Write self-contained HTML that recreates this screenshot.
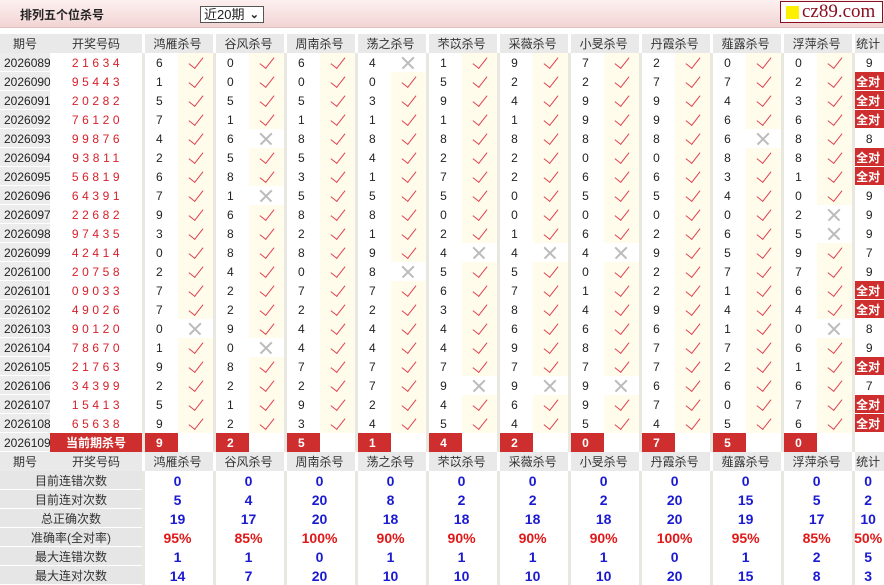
<!DOCTYPE html><html><head><meta charset="utf-8"><style>
*{margin:0;padding:0;box-sizing:border-box}
body{width:884px;height:583px;overflow:hidden;background:#fff;font-family:"Liberation Sans","Noto Sans CJK SC",sans-serif;font-size:12px;color:#222;position:relative}
.bar{position:absolute;left:0;top:0;width:884px;height:28px;background:linear-gradient(#fdf0f0,#f2d4d4);border-bottom:1px solid #e4c0c0}
.ttl{position:absolute;left:20px;top:6px;font-weight:bold;font-size:12px;color:#222}
.sel{position:absolute;left:200px;top:6px;width:64px;height:17px;border:1px solid #555;background:#fff;font-size:13px;line-height:15px;padding-left:3px}
.sel b{position:absolute;right:4px;top:1px;font-size:11px}
.logo{position:absolute;left:780px;top:1px;width:103px;height:22px;border:1px solid #8a1020;background:#fff;font-family:"Liberation Serif",serif;font-size:19px;color:#8a1020;line-height:19px;padding-left:21px}
.logo i{position:absolute;left:5px;top:4px;width:13px;height:13px;background:#ffef00}
table{position:absolute;left:0;top:34px;border-collapse:collapse;table-layout:fixed;width:884px}
td{height:19px;padding:0;text-align:center;white-space:nowrap;overflow:hidden}
.h td{background:#e9e9e9;color:#333}
.h td.g{box-shadow:inset 3px 0 #fff}
.q{background:#ececec;box-shadow:inset 0 -1px #fff;text-align:left;padding-left:4px}
.k{color:#d8202a;letter-spacing:3.6px;padding-left:3px}
.n{box-shadow:inset 3px 0 #e8e8e0;text-align:left;padding-left:14px}
.y{background:#fffcec;position:relative}
.w{position:relative}
.t{box-shadow:inset 3px 0 #e8e8e0;padding-left:2px}
.a{background:#cf2e2e;color:#fff;font-weight:bold;box-shadow:inset 3px 0 #e8e8e0,inset 0 -1px #fff}
.c::after{content:"";position:absolute;left:14px;top:1px;width:7px;height:13px;border-right:1.6px solid #e0404e;border-bottom:1.6px solid #e0404e;transform:rotate(38deg)}
.x::before,.x::after{content:"";position:absolute;left:9px;top:9px;width:16px;height:1.5px;background:#bbb;transform:rotate(45deg)}
.x::after{transform:rotate(-45deg)}
.cur .p{background:#cf2e2e;color:#fff;font-weight:bold;text-align:left;padding-left:14px;box-shadow:inset 3px 0 #e8e8e0}
.cur .kk{background:#cf2e2e;color:#fff;font-weight:bold}
.s td{font-weight:bold;color:#1a1ad0;font-size:14px;box-shadow:inset 3px 0 #e8e8e0}
.s td.l{background:#e6e6e6;color:#333;font-weight:normal;font-size:12px;box-shadow:inset 0 -1px #fff}
.s.r td{color:#e01818}
.s.r td.l{color:#333}
</style></head><body>
<div class="bar"><div class="ttl">排列五个位杀号</div><div class="sel">近20期<b>&#8964;</b></div><div class="logo"><i></i>cz89.com</div></div>
<table>
<colgroup><col style="width:50px"><col style="width:92px"><col span="20" style="width:35.5px"><col style="width:32px"></colgroup>
<tr class="h"><td>期号</td><td>开奖号码</td><td class="g" colspan="2">鸿雁杀号</td><td class="g" colspan="2">谷风杀号</td><td class="g" colspan="2">周南杀号</td><td class="g" colspan="2">荡之杀号</td><td class="g" colspan="2">芣苡杀号</td><td class="g" colspan="2">采薇杀号</td><td class="g" colspan="2">小旻杀号</td><td class="g" colspan="2">丹霞杀号</td><td class="g" colspan="2">薤露杀号</td><td class="g" colspan="2">浮萍杀号</td><td class="g">统计</td></tr>
<tr><td class="q">2026089</td><td class="k">21634</td><td class="n">6</td><td class="y c"></td><td class="n">0</td><td class="y c"></td><td class="n">6</td><td class="y c"></td><td class="n">4</td><td class="w x"></td><td class="n">1</td><td class="y c"></td><td class="n">9</td><td class="y c"></td><td class="n">7</td><td class="y c"></td><td class="n">2</td><td class="y c"></td><td class="n">0</td><td class="y c"></td><td class="n">0</td><td class="y c"></td><td class="t">9</td></tr>
<tr><td class="q">2026090</td><td class="k">95443</td><td class="n">1</td><td class="y c"></td><td class="n">0</td><td class="y c"></td><td class="n">0</td><td class="y c"></td><td class="n">0</td><td class="y c"></td><td class="n">5</td><td class="y c"></td><td class="n">2</td><td class="y c"></td><td class="n">2</td><td class="y c"></td><td class="n">7</td><td class="y c"></td><td class="n">7</td><td class="y c"></td><td class="n">2</td><td class="y c"></td><td class="a">全对</td></tr>
<tr><td class="q">2026091</td><td class="k">20282</td><td class="n">5</td><td class="y c"></td><td class="n">5</td><td class="y c"></td><td class="n">5</td><td class="y c"></td><td class="n">3</td><td class="y c"></td><td class="n">9</td><td class="y c"></td><td class="n">4</td><td class="y c"></td><td class="n">9</td><td class="y c"></td><td class="n">9</td><td class="y c"></td><td class="n">4</td><td class="y c"></td><td class="n">3</td><td class="y c"></td><td class="a">全对</td></tr>
<tr><td class="q">2026092</td><td class="k">76120</td><td class="n">7</td><td class="y c"></td><td class="n">1</td><td class="y c"></td><td class="n">1</td><td class="y c"></td><td class="n">1</td><td class="y c"></td><td class="n">1</td><td class="y c"></td><td class="n">1</td><td class="y c"></td><td class="n">9</td><td class="y c"></td><td class="n">9</td><td class="y c"></td><td class="n">6</td><td class="y c"></td><td class="n">6</td><td class="y c"></td><td class="a">全对</td></tr>
<tr><td class="q">2026093</td><td class="k">99876</td><td class="n">4</td><td class="y c"></td><td class="n">6</td><td class="w x"></td><td class="n">8</td><td class="y c"></td><td class="n">8</td><td class="y c"></td><td class="n">8</td><td class="y c"></td><td class="n">8</td><td class="y c"></td><td class="n">8</td><td class="y c"></td><td class="n">8</td><td class="y c"></td><td class="n">6</td><td class="w x"></td><td class="n">8</td><td class="y c"></td><td class="t">8</td></tr>
<tr><td class="q">2026094</td><td class="k">93811</td><td class="n">2</td><td class="y c"></td><td class="n">5</td><td class="y c"></td><td class="n">5</td><td class="y c"></td><td class="n">4</td><td class="y c"></td><td class="n">2</td><td class="y c"></td><td class="n">2</td><td class="y c"></td><td class="n">0</td><td class="y c"></td><td class="n">0</td><td class="y c"></td><td class="n">8</td><td class="y c"></td><td class="n">8</td><td class="y c"></td><td class="a">全对</td></tr>
<tr><td class="q">2026095</td><td class="k">56819</td><td class="n">6</td><td class="y c"></td><td class="n">8</td><td class="y c"></td><td class="n">3</td><td class="y c"></td><td class="n">1</td><td class="y c"></td><td class="n">7</td><td class="y c"></td><td class="n">2</td><td class="y c"></td><td class="n">6</td><td class="y c"></td><td class="n">6</td><td class="y c"></td><td class="n">3</td><td class="y c"></td><td class="n">1</td><td class="y c"></td><td class="a">全对</td></tr>
<tr><td class="q">2026096</td><td class="k">64391</td><td class="n">7</td><td class="y c"></td><td class="n">1</td><td class="w x"></td><td class="n">5</td><td class="y c"></td><td class="n">5</td><td class="y c"></td><td class="n">5</td><td class="y c"></td><td class="n">0</td><td class="y c"></td><td class="n">5</td><td class="y c"></td><td class="n">5</td><td class="y c"></td><td class="n">4</td><td class="y c"></td><td class="n">0</td><td class="y c"></td><td class="t">9</td></tr>
<tr><td class="q">2026097</td><td class="k">22682</td><td class="n">9</td><td class="y c"></td><td class="n">6</td><td class="y c"></td><td class="n">8</td><td class="y c"></td><td class="n">8</td><td class="y c"></td><td class="n">0</td><td class="y c"></td><td class="n">0</td><td class="y c"></td><td class="n">0</td><td class="y c"></td><td class="n">0</td><td class="y c"></td><td class="n">0</td><td class="y c"></td><td class="n">2</td><td class="w x"></td><td class="t">9</td></tr>
<tr><td class="q">2026098</td><td class="k">97435</td><td class="n">3</td><td class="y c"></td><td class="n">8</td><td class="y c"></td><td class="n">2</td><td class="y c"></td><td class="n">1</td><td class="y c"></td><td class="n">2</td><td class="y c"></td><td class="n">1</td><td class="y c"></td><td class="n">6</td><td class="y c"></td><td class="n">2</td><td class="y c"></td><td class="n">6</td><td class="y c"></td><td class="n">5</td><td class="w x"></td><td class="t">9</td></tr>
<tr><td class="q">2026099</td><td class="k">42414</td><td class="n">0</td><td class="y c"></td><td class="n">8</td><td class="y c"></td><td class="n">8</td><td class="y c"></td><td class="n">9</td><td class="y c"></td><td class="n">4</td><td class="w x"></td><td class="n">4</td><td class="w x"></td><td class="n">4</td><td class="w x"></td><td class="n">9</td><td class="y c"></td><td class="n">5</td><td class="y c"></td><td class="n">9</td><td class="y c"></td><td class="t">7</td></tr>
<tr><td class="q">2026100</td><td class="k">20758</td><td class="n">2</td><td class="y c"></td><td class="n">4</td><td class="y c"></td><td class="n">0</td><td class="y c"></td><td class="n">8</td><td class="w x"></td><td class="n">5</td><td class="y c"></td><td class="n">5</td><td class="y c"></td><td class="n">0</td><td class="y c"></td><td class="n">2</td><td class="y c"></td><td class="n">7</td><td class="y c"></td><td class="n">7</td><td class="y c"></td><td class="t">9</td></tr>
<tr><td class="q">2026101</td><td class="k">09033</td><td class="n">7</td><td class="y c"></td><td class="n">2</td><td class="y c"></td><td class="n">7</td><td class="y c"></td><td class="n">7</td><td class="y c"></td><td class="n">6</td><td class="y c"></td><td class="n">7</td><td class="y c"></td><td class="n">1</td><td class="y c"></td><td class="n">2</td><td class="y c"></td><td class="n">1</td><td class="y c"></td><td class="n">6</td><td class="y c"></td><td class="a">全对</td></tr>
<tr><td class="q">2026102</td><td class="k">49026</td><td class="n">7</td><td class="y c"></td><td class="n">2</td><td class="y c"></td><td class="n">2</td><td class="y c"></td><td class="n">2</td><td class="y c"></td><td class="n">3</td><td class="y c"></td><td class="n">8</td><td class="y c"></td><td class="n">4</td><td class="y c"></td><td class="n">9</td><td class="y c"></td><td class="n">4</td><td class="y c"></td><td class="n">4</td><td class="y c"></td><td class="a">全对</td></tr>
<tr><td class="q">2026103</td><td class="k">90120</td><td class="n">0</td><td class="w x"></td><td class="n">9</td><td class="y c"></td><td class="n">4</td><td class="y c"></td><td class="n">4</td><td class="y c"></td><td class="n">4</td><td class="y c"></td><td class="n">6</td><td class="y c"></td><td class="n">6</td><td class="y c"></td><td class="n">6</td><td class="y c"></td><td class="n">1</td><td class="y c"></td><td class="n">0</td><td class="w x"></td><td class="t">8</td></tr>
<tr><td class="q">2026104</td><td class="k">78670</td><td class="n">1</td><td class="y c"></td><td class="n">0</td><td class="w x"></td><td class="n">4</td><td class="y c"></td><td class="n">4</td><td class="y c"></td><td class="n">4</td><td class="y c"></td><td class="n">9</td><td class="y c"></td><td class="n">8</td><td class="y c"></td><td class="n">7</td><td class="y c"></td><td class="n">7</td><td class="y c"></td><td class="n">6</td><td class="y c"></td><td class="t">9</td></tr>
<tr><td class="q">2026105</td><td class="k">21763</td><td class="n">9</td><td class="y c"></td><td class="n">8</td><td class="y c"></td><td class="n">7</td><td class="y c"></td><td class="n">7</td><td class="y c"></td><td class="n">7</td><td class="y c"></td><td class="n">7</td><td class="y c"></td><td class="n">7</td><td class="y c"></td><td class="n">7</td><td class="y c"></td><td class="n">2</td><td class="y c"></td><td class="n">1</td><td class="y c"></td><td class="a">全对</td></tr>
<tr><td class="q">2026106</td><td class="k">34399</td><td class="n">2</td><td class="y c"></td><td class="n">2</td><td class="y c"></td><td class="n">2</td><td class="y c"></td><td class="n">7</td><td class="y c"></td><td class="n">9</td><td class="w x"></td><td class="n">9</td><td class="w x"></td><td class="n">9</td><td class="w x"></td><td class="n">6</td><td class="y c"></td><td class="n">6</td><td class="y c"></td><td class="n">6</td><td class="y c"></td><td class="t">7</td></tr>
<tr><td class="q">2026107</td><td class="k">15413</td><td class="n">5</td><td class="y c"></td><td class="n">1</td><td class="y c"></td><td class="n">9</td><td class="y c"></td><td class="n">2</td><td class="y c"></td><td class="n">4</td><td class="y c"></td><td class="n">6</td><td class="y c"></td><td class="n">9</td><td class="y c"></td><td class="n">7</td><td class="y c"></td><td class="n">0</td><td class="y c"></td><td class="n">7</td><td class="y c"></td><td class="a">全对</td></tr>
<tr><td class="q">2026108</td><td class="k">65638</td><td class="n">9</td><td class="y c"></td><td class="n">2</td><td class="y c"></td><td class="n">3</td><td class="y c"></td><td class="n">4</td><td class="y c"></td><td class="n">5</td><td class="y c"></td><td class="n">4</td><td class="y c"></td><td class="n">5</td><td class="y c"></td><td class="n">4</td><td class="y c"></td><td class="n">5</td><td class="y c"></td><td class="n">6</td><td class="y c"></td><td class="a">全对</td></tr>
<tr class="cur"><td class="q">2026109</td><td class="kk">当前期杀号</td><td class="p">9</td><td></td><td class="p">2</td><td></td><td class="p">5</td><td></td><td class="p">1</td><td></td><td class="p">4</td><td></td><td class="p">2</td><td></td><td class="p">0</td><td></td><td class="p">7</td><td></td><td class="p">5</td><td></td><td class="p">0</td><td></td><td class="t"></td></tr>
<tr class="h"><td>期号</td><td>开奖号码</td><td class="g" colspan="2">鸿雁杀号</td><td class="g" colspan="2">谷风杀号</td><td class="g" colspan="2">周南杀号</td><td class="g" colspan="2">荡之杀号</td><td class="g" colspan="2">芣苡杀号</td><td class="g" colspan="2">采薇杀号</td><td class="g" colspan="2">小旻杀号</td><td class="g" colspan="2">丹霞杀号</td><td class="g" colspan="2">薤露杀号</td><td class="g" colspan="2">浮萍杀号</td><td class="g">统计</td></tr>
<tr class="s"><td class="l" colspan="2">目前连错次数</td><td colspan="2">0</td><td colspan="2">0</td><td colspan="2">0</td><td colspan="2">0</td><td colspan="2">0</td><td colspan="2">0</td><td colspan="2">0</td><td colspan="2">0</td><td colspan="2">0</td><td colspan="2">0</td><td>0</td></tr>
<tr class="s"><td class="l" colspan="2">目前连对次数</td><td colspan="2">5</td><td colspan="2">4</td><td colspan="2">20</td><td colspan="2">8</td><td colspan="2">2</td><td colspan="2">2</td><td colspan="2">2</td><td colspan="2">20</td><td colspan="2">15</td><td colspan="2">5</td><td>2</td></tr>
<tr class="s"><td class="l" colspan="2">总正确次数</td><td colspan="2">19</td><td colspan="2">17</td><td colspan="2">20</td><td colspan="2">18</td><td colspan="2">18</td><td colspan="2">18</td><td colspan="2">18</td><td colspan="2">20</td><td colspan="2">19</td><td colspan="2">17</td><td>10</td></tr>
<tr class="s r"><td class="l" colspan="2">准确率(全对率)</td><td colspan="2">95%</td><td colspan="2">85%</td><td colspan="2">100%</td><td colspan="2">90%</td><td colspan="2">90%</td><td colspan="2">90%</td><td colspan="2">90%</td><td colspan="2">100%</td><td colspan="2">95%</td><td colspan="2">85%</td><td>50%</td></tr>
<tr class="s"><td class="l" colspan="2">最大连错次数</td><td colspan="2">1</td><td colspan="2">1</td><td colspan="2">0</td><td colspan="2">1</td><td colspan="2">1</td><td colspan="2">1</td><td colspan="2">1</td><td colspan="2">0</td><td colspan="2">1</td><td colspan="2">2</td><td>5</td></tr>
<tr class="s"><td class="l" colspan="2">最大连对次数</td><td colspan="2">14</td><td colspan="2">7</td><td colspan="2">20</td><td colspan="2">10</td><td colspan="2">10</td><td colspan="2">10</td><td colspan="2">10</td><td colspan="2">20</td><td colspan="2">15</td><td colspan="2">8</td><td>3</td></tr>
</table>
</body></html>
